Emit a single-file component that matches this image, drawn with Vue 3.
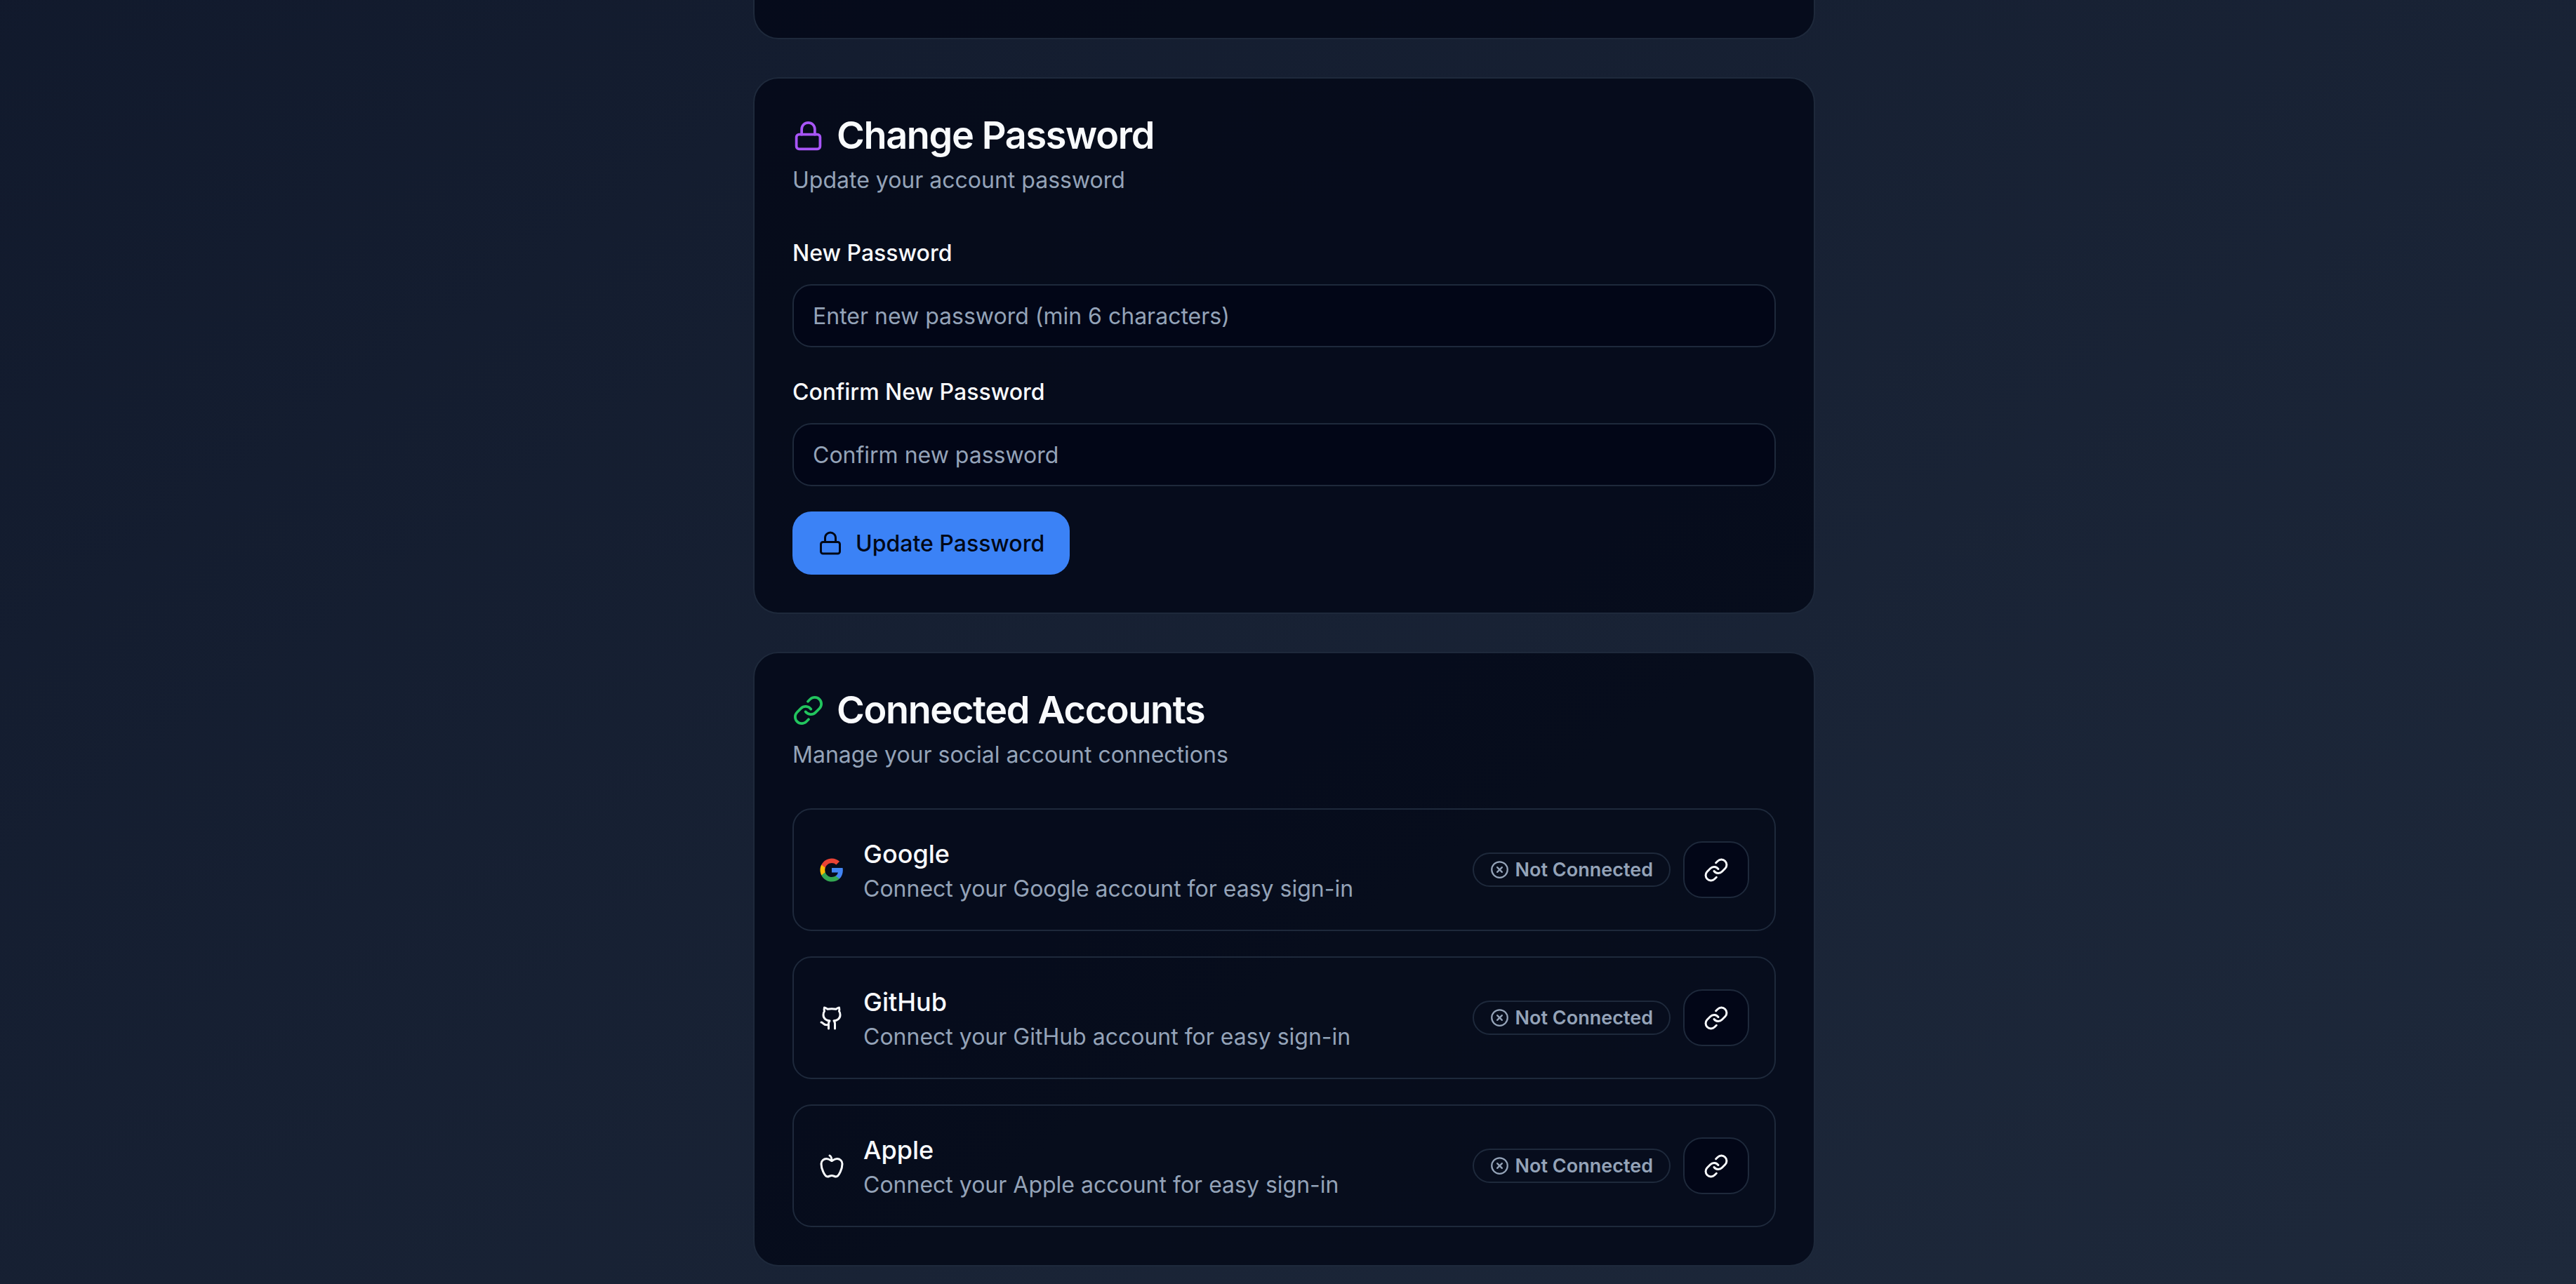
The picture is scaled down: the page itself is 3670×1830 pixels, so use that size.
<script setup>
import { ref } from 'vue'

const newPassword = ref('')
const confirmPassword = ref('')

const accounts = [
  { id: 'google', name: 'Google' },
  { id: 'github', name: 'GitHub' },
  { id: 'apple', name: 'Apple' },
]
</script>

<template>
  <div class="page">
    <svg class="sprite" aria-hidden="true">
      <symbol id="i-lock" viewBox="0 0 24 24">
        <rect width="18" height="11" x="3" y="11" rx="2" ry="2" />
        <path d="M7 11V7a5 5 0 0 1 10 0v4" />
      </symbol>
      <symbol id="i-link" viewBox="0 0 24 24">
        <path d="M10 13a5 5 0 0 0 7.54.54l3-3a5 5 0 0 0-7.07-7.07l-1.72 1.71" />
        <path d="M14 11a5 5 0 0 0-7.54-.54l-3 3a5 5 0 0 0 7.07 7.07l1.71-1.71" />
      </symbol>
      <symbol id="i-circle-x" viewBox="0 0 24 24">
        <circle cx="12" cy="12" r="10" />
        <path d="m15 9-6 6" />
        <path d="m9 9 6 6" />
      </symbol>
      <symbol id="i-github" viewBox="0 0 24 24">
        <path d="M15 22v-4a4.8 4.8 0 0 0-1-3.5c3 0 6-2 6-5.5.08-1.25-.27-2.48-1-3.5.28-1.15.28-2.35 0-3.5 0 0-1 0-3 1.5-2.64-.5-5.36-.5-8 0C6 2 5 2 5 2c-.3 1.15-.3 2.35 0 3.5A5.403 5.403 0 0 0 4 9c0 3.5 3 5.5 6 5.5-.39.49-.68 1.05-.85 1.65-.17.6-.22 1.23-.15 1.85v4" />
        <path d="M9 18c-4.51 2-5-2-7-2" />
      </symbol>
      <symbol id="i-apple" viewBox="0 0 24 24">
        <path d="M12 20.94c1.5 0 2.75 1.06 4 1.06 3 0 6-8 6-12.22A4.91 4.91 0 0 0 17 5c-2.22 0-4 1.44-5 2-1-.56-2.78-2-5-2a4.9 4.9 0 0 0-5 4.78C2 14 5 22 8 22c1.25 0 2.5-1.06 4-1.06Z" />
        <path d="M10 2c1 .5 2 2 2 5" />
      </symbol>
    </svg>

    <main class="column">
      <section class="card card-previous"></section>

      <section class="card">
        <header class="card-header">
          <h2 class="card-title">
            <svg class="icon icon-title purple" aria-hidden="true"><use href="#i-lock" /></svg>
            Change Password
          </h2>
          <p class="muted">Update your account password</p>
        </header>
        <form class="stack" @submit.prevent>
          <div class="field">
            <label for="new-password">New Password</label>
            <input id="new-password" v-model="newPassword" type="password" placeholder="Enter new password (min 6 characters)" />
          </div>
          <div class="field">
            <label for="confirm-password">Confirm New Password</label>
            <input id="confirm-password" v-model="confirmPassword" type="password" placeholder="Confirm new password" />
          </div>
          <button type="submit" class="primary">
            <svg class="icon" aria-hidden="true"><use href="#i-lock" /></svg>
            Update Password
          </button>
        </form>
      </section>

      <section class="card">
        <header class="card-header">
          <h2 class="card-title">
            <svg class="icon icon-title green" aria-hidden="true"><use href="#i-link" /></svg>
            Connected Accounts
          </h2>
          <p class="muted">Manage your social account connections</p>
        </header>
        <ul class="stack">
          <li v-for="account in accounts" :key="account.id" class="account">
            <svg v-if="account.id === 'google'" class="logo" viewBox="0 0 24 24" aria-hidden="true">
              <path fill="#4285F4" d="M22.56 12.25c0-.78-.07-1.53-.2-2.25H12v4.26h5.92c-.26 1.37-1.04 2.53-2.21 3.31v2.77h3.57c2.08-1.92 3.28-4.74 3.28-8.09z" />
              <path fill="#34A853" d="M12 23c2.97 0 5.46-.98 7.28-2.66l-3.57-2.77c-.98.66-2.23 1.06-3.71 1.06-2.86 0-5.29-1.93-6.16-4.53H2.18v2.84C3.99 20.53 7.7 23 12 23z" />
              <path fill="#FBBC05" d="M5.84 14.09c-.22-.66-.35-1.36-.35-2.09s.13-1.43.35-2.09V7.07H2.18C1.43 8.55 1 10.22 1 12s.43 3.45 1.18 4.93l2.85-2.22.81-.62z" />
              <path fill="#EA4335" d="M12 5.38c1.62 0 3.06.56 4.21 1.64l3.15-3.15C17.45 2.09 14.97 1 12 1 7.7 1 3.99 3.47 2.18 7.07l3.66 2.84c.87-2.6 3.3-4.53 6.16-4.53z" />
            </svg>
            <svg v-else class="icon" aria-hidden="true"><use :href="`#i-${account.id}`" /></svg>
            <div class="account-text">
              <h3>{{ account.name }}</h3>
              <p class="muted">Connect your {{ account.name }} account for easy sign-in</p>
            </div>
            <span class="badge">
              <svg class="icon icon-badge" aria-hidden="true"><use href="#i-circle-x" /></svg>
              Not Connected
            </span>
            <button type="button" class="outline" :aria-label="`Connect ${account.name}`">
              <svg class="icon" aria-hidden="true"><use href="#i-link" /></svg>
            </button>
          </li>
        </ul>
      </section>
    </main>
  </div>
</template>

<style>
body {
  margin: 0;
  background: #0f172a;
}
</style>

<style scoped>
.page {
  box-sizing: border-box;
  min-height: 100vh;
  padding: 0 11px 24px 0;
  background: linear-gradient(to bottom right, #0f172a, #1e293b) 0 100% / 100% 144% no-repeat;
  color: #f8fafc;
  font-family: Inter, "Liberation Sans", sans-serif;
  font-size: 36px;
  line-height: 54px;
}

.page * {
  box-sizing: border-box;
}

.sprite {
  position: absolute;
  width: 0;
  height: 0;
}

.column {
  display: flex;
  flex-direction: column;
  gap: 54px;
  max-width: 1513px;
  margin: 0 auto;
}

.card {
  padding: 54px;
  border: 2px solid #1e293b;
  border-radius: 36px;
  background: rgba(2, 8, 23, 0.8);
}

/* Only the tail of the preceding card is in view */
.card-previous {
  height: 56px;
  padding: 0;
  border-top: 0;
  border-top-left-radius: 0;
  border-top-right-radius: 0;
}

.card-header {
  display: flex;
  flex-direction: column;
  gap: 14px;
  margin-bottom: 54px;
}

.card-title {
  display: flex;
  align-items: center;
  gap: 18px;
  margin: 0;
  font-size: 54px;
  font-weight: 600;
  line-height: 54px;
  letter-spacing: -0.025em;
}

.muted {
  margin: 0;
  color: #94a3b8;
  font-size: 32px;
  line-height: 45px;
}

.icon {
  flex: none;
  width: 36px;
  height: 36px;
  fill: none;
  stroke: currentColor;
  stroke-width: 2;
  stroke-linecap: round;
  stroke-linejoin: round;
}

.icon-title {
  width: 45px;
  height: 45px;
}

.icon-badge {
  width: 27px;
  height: 27px;
}

.purple {
  color: #a855f7;
}

.green {
  color: #22c55e;
}

.logo {
  flex: none;
  width: 36px;
  height: 36px;
}

.stack {
  display: flex;
  flex-direction: column;
  align-items: stretch;
  gap: 36px;
  margin: 0;
  padding: 0;
  list-style: none;
}

.field {
  display: flex;
  flex-direction: column;
  gap: 16px;
}

label {
  font-size: 32px;
  font-weight: 500;
  line-height: 56px;
}

input {
  width: 100%;
  height: 90px;
  padding: 0 27px;
  border: 2px solid #1e293b;
  border-radius: 27px;
  background: #020617;
  color: #f8fafc;
  font-family: inherit;
  font-size: 32px;
}

input::placeholder {
  color: #94a3b8;
  opacity: 1;
}

button {
  display: inline-flex;
  align-items: center;
  justify-content: center;
  gap: 18px;
  border-radius: 27px;
  font-family: inherit;
  font-size: 32px;
  font-weight: 500;
  cursor: pointer;
}

.primary {
  align-self: flex-start;
  height: 90px;
  padding: 0 36px;
  border: 0;
  background: #3b82f6;
  color: #020817;
}

.outline {
  height: 81px;
  padding: 0 27px;
  border: 2px solid #1e293b;
  background: #020617;
  color: #f8fafc;
}

.account {
  display: flex;
  align-items: center;
  padding: 36px;
  border: 2px solid #1e293b;
  border-radius: 27px;
}

.account-text {
  flex: 1;
  margin-left: 27px;
}

h3 {
  margin: 0;
  font-size: 36px;
  font-weight: 500;
  line-height: 54px;
}

.badge {
  display: inline-flex;
  align-items: center;
  gap: 9px;
  height: 49px;
  margin-right: 18px;
  padding: 0 23px;
  border: 2px solid #1e293b;
  border-radius: 25px;
  color: #94a3b8;
  font-size: 27px;
  font-weight: 600;
  line-height: 36px;
}
</style>
